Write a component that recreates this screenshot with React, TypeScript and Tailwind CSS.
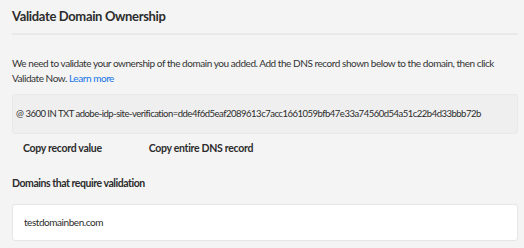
import React from 'react';

const RECORD =
    '@ 3600 IN TXT adobe-idp-site-verification=dde4f6d5eaf2089613c7acc1661059bfb47e33a74560d54a51c22b4d33bbb72b';

export default function App() {
    return (
        <div className="w-[524px] h-[248px] bg-[#f4f4f4] pl-3 pr-[6px] text-[#2c2c2c] font-['Lato',sans-serif] overflow-hidden">
            <div className="pt-[8px] pb-[9px] border-b-2 border-[#e9e9e9]">
                <h1 className="text-[13px] leading-[16px] font-bold tracking-[-0.35px] text-[#2c2c2c]">Validate Domain Ownership</h1>
            </div>

            <p className="mt-[21px] text-[10px] leading-[15px] tracking-[-0.45px] text-[#333]">
                <span className="whitespace-nowrap">
                    We need to validate your ownership of the domain you added. Add the DNS record shown below to the domain, then click
                </span>
                <br />
                Validate Now.{' '}
                <a href="#" className="text-[#1473e6]">
                    Learn more
                </a>
            </p>

            <div className="mt-[8px] h-[40px] flex items-center px-[3px] bg-[#efefef] border border-[#e8e8e8] rounded-[3px] text-[9.5px] tracking-[-0.5px] whitespace-nowrap">
                {RECORD}
            </div>

            <div className="mt-[7px] flex gap-[47px] pl-[11px] text-[10.5px] leading-[14px] font-bold tracking-[-0.3px] text-[#2c2c2c]">
                <button type="button">Copy record value</button>
                <button type="button">Copy entire DNS record</button>
            </div>

            <div className="mt-[21px] text-[10.5px] leading-[14px] font-bold tracking-[-0.45px]">Domains that require validation</div>

            <div className="mt-[14px] h-[37px] flex items-center px-[11px] bg-white border border-[#e6e6e6] rounded-[3px] text-[10px] tracking-[-0.45px]">
                testdomainben.com
            </div>
        </div>
    );
}
